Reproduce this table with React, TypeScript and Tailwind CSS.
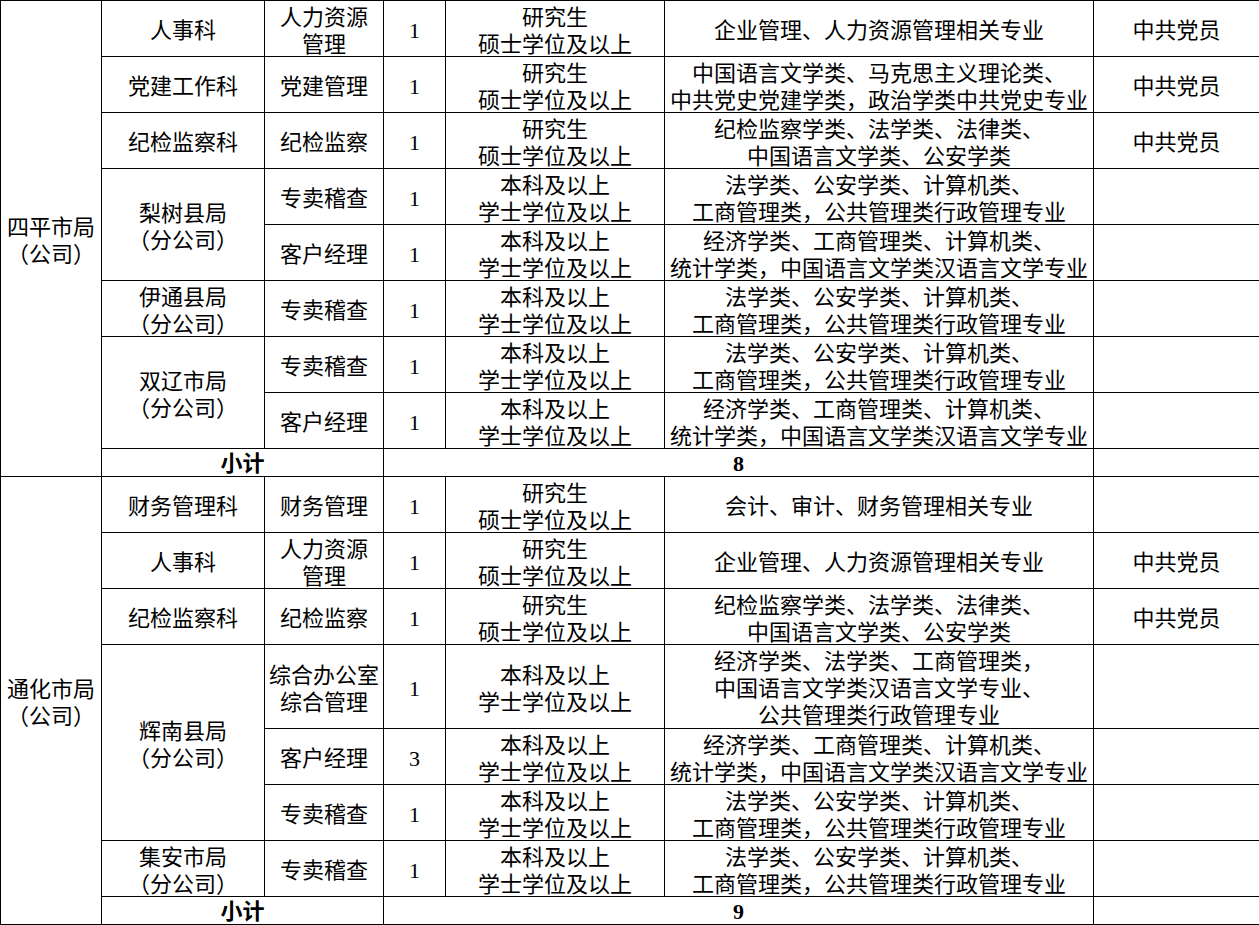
import React from "react";

type Cell = { t: string; rs?: number; cs?: number; b?: boolean };
type Row = { h: number; cells: Cell[] };

const R = "本科及以上\n学士学位及以上";
const G = "研究生\n硕士学位及以上";
const LAW = "法学类、公安学类、计算机类、\n工商管理类，公共管理类行政管理专业";
const ECO = "经济学类、工商管理类、计算机类、\n统计学类，中国语言文学类汉语言文学专业";
const JJ = "纪检监察学类、法学类、法律类、\n中国语言文学类、公安学类";

const rows: Row[] = [
  { h: 56, cells: [{ t: "四平市局\n（公司）", rs: 9 }, { t: "人事科" }, { t: "人力资源\n管理" }, { t: "1" }, { t: G }, { t: "企业管理、人力资源管理相关专业" }, { t: "中共党员" }] },
  { h: 56, cells: [{ t: "党建工作科" }, { t: "党建管理" }, { t: "1" }, { t: G }, { t: "中国语言文学类、马克思主义理论类、\n中共党史党建学类，政治学类中共党史专业" }, { t: "中共党员" }] },
  { h: 56, cells: [{ t: "纪检监察科" }, { t: "纪检监察" }, { t: "1" }, { t: G }, { t: JJ }, { t: "中共党员" }] },
  { h: 56, cells: [{ t: "梨树县局\n（分公司）", rs: 2 }, { t: "专卖稽查" }, { t: "1" }, { t: R }, { t: LAW }, { t: "" }] },
  { h: 56, cells: [{ t: "客户经理" }, { t: "1" }, { t: R }, { t: ECO }, { t: "" }] },
  { h: 56, cells: [{ t: "伊通县局\n（分公司）" }, { t: "专卖稽查" }, { t: "1" }, { t: R }, { t: LAW }, { t: "" }] },
  { h: 56, cells: [{ t: "双辽市局\n（分公司）", rs: 2 }, { t: "专卖稽查" }, { t: "1" }, { t: R }, { t: LAW }, { t: "" }] },
  { h: 56, cells: [{ t: "客户经理" }, { t: "1" }, { t: R }, { t: ECO }, { t: "" }] },
  { h: 28, cells: [{ t: "小计", cs: 2, b: true }, { t: "8", cs: 3, b: true }, { t: "" }] },
  { h: 56, cells: [{ t: "通化市局\n（公司）", rs: 8 }, { t: "财务管理科" }, { t: "财务管理" }, { t: "1" }, { t: G }, { t: "会计、审计、财务管理相关专业" }, { t: "" }] },
  { h: 56, cells: [{ t: "人事科" }, { t: "人力资源\n管理" }, { t: "1" }, { t: G }, { t: "企业管理、人力资源管理相关专业" }, { t: "中共党员" }] },
  { h: 56, cells: [{ t: "纪检监察科" }, { t: "纪检监察" }, { t: "1" }, { t: G }, { t: JJ }, { t: "中共党员" }] },
  { h: 84, cells: [{ t: "辉南县局\n（分公司）", rs: 3 }, { t: "综合办公室\n综合管理" }, { t: "1" }, { t: R }, { t: "经济学类、法学类、工商管理类，\n中国语言文学类汉语言文学专业、\n公共管理类行政管理专业" }, { t: "" }] },
  { h: 56, cells: [{ t: "客户经理" }, { t: "3" }, { t: R }, { t: ECO }, { t: "" }] },
  { h: 56, cells: [{ t: "专卖稽查" }, { t: "1" }, { t: R }, { t: LAW }, { t: "" }] },
  { h: 56, cells: [{ t: "集安市局\n（分公司）" }, { t: "专卖稽查" }, { t: "1" }, { t: R }, { t: LAW }, { t: "" }] },
  { h: 28, cells: [{ t: "小计", cs: 2, b: true }, { t: "9", cs: 3, b: true }, { t: "" }] },
];

export default function App() {
  return (
    <div className="w-[1259px] bg-white text-black" style={{ fontFamily: '"Liberation Serif", "Noto Sans CJK SC", serif' }}>
      <table className="w-[1259px] table-fixed border-collapse text-[22px] leading-[27px]">
        <colgroup>
          <col className="w-[101px]" />
          <col className="w-[163px]" />
          <col className="w-[119px]" />
          <col className="w-[62px]" />
          <col className="w-[219px]" />
          <col className="w-[429px]" />
          <col className="w-[166px]" />
        </colgroup>
        <tbody>
          {rows.map((r, i) => (
            <tr key={i} className={r.h === 56 ? "h-[56px]" : r.h === 84 ? "h-[84px]" : "h-[28px]"}>
              {r.cells.map((c, j) => (
                <td
                  key={j}
                  rowSpan={c.rs}
                  colSpan={c.cs}
                  className={
                    "border border-black p-0 text-center align-middle whitespace-pre overflow-visible " +
                    (c.b ? "font-bold" : "font-normal")
                  }
                >
                  <span className={"inline-block " + (c.b ? "translate-y-[1px]" : "translate-y-[2px]")}>{c.t}</span>
                </td>
              ))}
            </tr>
          ))}
        </tbody>
      </table>
    </div>
  );
}
